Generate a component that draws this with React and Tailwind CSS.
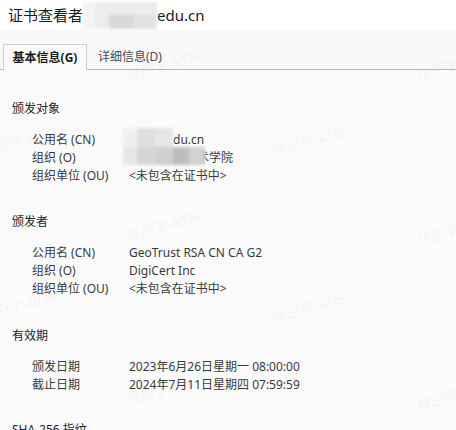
import React from "react";

const FONT = { fontFamily: '"Noto Sans", "Noto Sans CJK SC", sans-serif' };

function Row({ label, children }) {
  return (
    <div className="flex h-[18px] items-center text-[12px] leading-[18px] text-[#3a3a3a]">
      <div className="w-[97px] shrink-0 pl-[32px] box-content" style={{ width: 97 }}>{label}</div>
      <div className="whitespace-nowrap">{children}</div>
    </div>
  );
}

function Section({ title, children, gapTop = "mt-0" }) {
  return (
    <div className={gapTop}>
      <div className="h-[18px] pl-[12px] text-[12px] leading-[18px] text-[#1e1e1e]">{title}</div>
      {children ? <div className="mt-[13px] flex flex-col">{children}</div> : null}
    </div>
  );
}

const marks = [
  [125, 55], [415, 55], [-20, 130], [270, 130], [125, 215], [415, 220], [-20, 295], [270, 297], [125, 380], [415, 385],
];

export default function App() {
  return (
    <div className="relative h-[430px] w-[456px] overflow-hidden bg-[#fbfbfb]" style={FONT}>
      <div className="flex h-[30px] items-center bg-white pl-[8px] text-[15px] text-[#1a1a1a]">
        <span>证书查看者</span>
        <span className="relative inline-block h-[27px] w-[74px]">
          <span className="absolute inset-0 flex blur-[1.5px]">
            <span className="h-full w-[12px] bg-[#f3f3f3]" />
            <span className="h-full w-[14px] bg-[#ececec]" />
            <span className="flex h-full w-[48px] flex-col">
              <span className="h-1/2 bg-[#ececec]" />
              <span className="flex h-1/2">
                <span className="w-1/2 bg-[#d8d8d8]" />
                <span className="w-1/2 bg-[#e2e2e2]" />
              </span>
            </span>
          </span>
        </span>
        <span>edu.cn</span>
      </div>
      <div className="bg-[#f9f9f9] pt-[14px]">
        <div className="flex items-end border-b border-[#b4b4b4] pl-[3px]">
          <div className="-mb-px flex h-[26px] w-[84px] items-center justify-center border border-b-0 border-[#cfcfcf] bg-[#fbfbfb] text-[12px] font-bold text-[#1a1a1a]">
            基本信息(G)
          </div>
          <div className="flex h-[25px] items-center pl-[11px] text-[12px] text-[#4a4a4a]">详细信息(D)</div>
        </div>
      </div>
      <div className="pt-[30px]">
        <Section title="颁发对象">
          <Row label="公用名 (CN)">
            <span className="inline-block w-[44px]" />du.cn
          </Row>
          <Row label="组织 (O)">
            <span className="inline-block w-[68px]" />术学院
          </Row>
          <Row label="组织单位 (OU)">&lt;未包含在证书中&gt;</Row>
        </Section>
        <Section title="颁发者" gapTop="mt-[28px]">
          <Row label="公用名 (CN)">GeoTrust RSA CN CA G2</Row>
          <Row label="组织 (O)">DigiCert Inc</Row>
          <Row label="组织单位 (OU)">&lt;未包含在证书中&gt;</Row>
        </Section>
        <Section title="有效期" gapTop="mt-[29px]">
          <Row label="颁发日期">2023年6月26日星期一 08:00:00</Row>
          <Row label="截止日期">2024年7月11日星期四 07:59:59</Row>
        </Section>
        <Section title="SHA-256 指纹" gapTop="mt-[27px]" />
      </div>
      {/* mosaic over value column */}
      <div className="pointer-events-none absolute left-[123px] top-[128px] flex h-[37px] w-[82px] flex-col blur-[1.5px]">
        <div className="flex h-1/2">
          <div className="w-[14px] bg-[#efefef]" />
          <div className="w-[18px] bg-[#dedede]" />
          <div className="w-[18px] bg-[#e6e6e6]" />
        </div>
        <div className="flex h-1/2">
          <div className="w-[14px] bg-[#e6e6e6]" />
          <div className="w-[20px] bg-[#d6d6d6]" />
          <div className="w-[16px] bg-[#cfcfcf]" />
          <div className="w-[16px] bg-[#bdbdbd]" />
          <div className="w-[16px] bg-[#d2d2d2]" />
        </div>
      </div>
      {/* watermark */}
      <div className="pointer-events-none absolute inset-0">
        {marks.map(([x, y], i) => (
          <span
            key={i}
            className="absolute whitespace-nowrap text-[14px] italic text-[#000000]/[0.05]"
            style={{ left: x, top: y, transform: "rotate(-15deg)" }}
          >
            徐冠宇 4036
          </span>
        ))}
      </div>
    </div>
  );
}
